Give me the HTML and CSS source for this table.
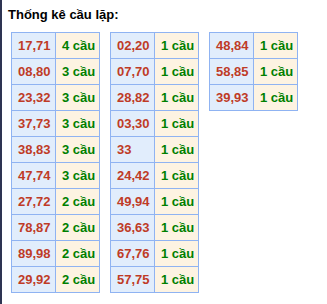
FILE: index.html
```html
<!DOCTYPE html>
<html lang="vi">
<head>
<meta charset="utf-8">
<title>Thống kê cầu lặp</title>
<link rel="stylesheet" href="styles.css">
</head>
<body>
<div class="page">
  <h3 class="title">Thống kê cầu lặp:</h3>
  <div class="tables">
    <table class="stat">
      <tr><td class="pair">17,71</td><td class="count">4 cầu</td></tr>
      <tr><td class="pair">08,80</td><td class="count">3 cầu</td></tr>
      <tr><td class="pair">23,32</td><td class="count">3 cầu</td></tr>
      <tr><td class="pair">37,73</td><td class="count">3 cầu</td></tr>
      <tr><td class="pair">38,83</td><td class="count">3 cầu</td></tr>
      <tr><td class="pair">47,74</td><td class="count">3 cầu</td></tr>
      <tr><td class="pair">27,72</td><td class="count">2 cầu</td></tr>
      <tr><td class="pair">78,87</td><td class="count">2 cầu</td></tr>
      <tr><td class="pair">89,98</td><td class="count">2 cầu</td></tr>
      <tr><td class="pair">29,92</td><td class="count">2 cầu</td></tr>
    </table>
    <table class="stat">
      <tr><td class="pair">02,20</td><td class="count">1 cầu</td></tr>
      <tr><td class="pair">07,70</td><td class="count">1 cầu</td></tr>
      <tr><td class="pair">28,82</td><td class="count">1 cầu</td></tr>
      <tr><td class="pair">03,30</td><td class="count">1 cầu</td></tr>
      <tr><td class="pair">33</td><td class="count">1 cầu</td></tr>
      <tr><td class="pair">24,42</td><td class="count">1 cầu</td></tr>
      <tr><td class="pair">49,94</td><td class="count">1 cầu</td></tr>
      <tr><td class="pair">36,63</td><td class="count">1 cầu</td></tr>
      <tr><td class="pair">67,76</td><td class="count">1 cầu</td></tr>
      <tr><td class="pair">57,75</td><td class="count">1 cầu</td></tr>
    </table>
    <table class="stat">
      <tr><td class="pair">48,84</td><td class="count">1 cầu</td></tr>
      <tr><td class="pair">58,85</td><td class="count">1 cầu</td></tr>
      <tr><td class="pair">39,93</td><td class="count">1 cầu</td></tr>
    </table>
  </div>
</div>
</body>
</html>
```
FILE: styles.css
```css
html, body {
  margin: 0;
  padding: 0;
  background: #ffffff;
}

body {
  font-family: "Liberation Sans", Arial, sans-serif;
  font-size: 13px;
  border-left: 2px solid #2e3452;
  min-height: 304px;
  box-sizing: border-box;
}

.page {
  padding: 7px 0 0 6px;
}

.title {
  margin: 0;
  font-size: 13px;
  font-weight: bold;
  line-height: 16px;
  color: #000000;
}

.tables {
  display: flex;
  align-items: flex-start;
  gap: 10px;
  margin-top: 9px;
  padding-left: 3px;
}

.stat {
  border-collapse: collapse;
  table-layout: fixed;
  width: 89px;
}

.stat td {
  border: 1px solid #8fb3f2;
  height: 25px;
  padding: 0 0 0 6px;
  white-space: nowrap;
  line-height: 16px;
  font-weight: bold;
}

.pair {
  background: #e1edfc;
  color: #bf3b26;
}

.count {
  background: #fdf3e2;
  color: #008000;
}
```
